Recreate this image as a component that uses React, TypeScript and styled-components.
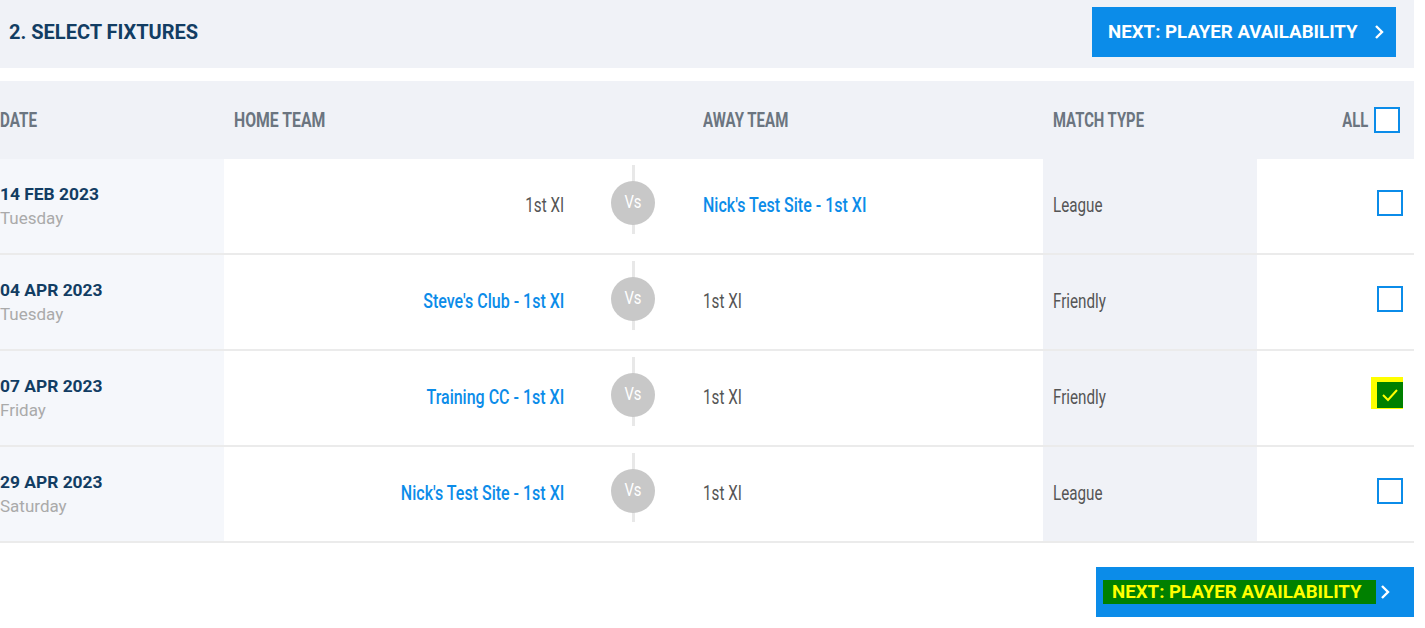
import React from 'react';
import styled, { createGlobalStyle } from 'styled-components';

const GlobalStyle = createGlobalStyle`
  html, body {
    margin: 0;
    padding: 0;
    background: #ffffff;
  }
`;

const navy = '#123d63';
const blue = '#0b8ce9';

const Page = styled.div`
  width: 1414px;
  font-family: Roboto, "Liberation Sans", sans-serif;
`;

const TopBar = styled.div`
  height: 68px;
  background: #f0f2f7;
  display: flex;
  align-items: center;
  justify-content: space-between;
  padding: 0 18px 4px 9px;
  box-sizing: border-box;
`;

const Title = styled.h2`
  margin: 0;
  font-size: 20px;
  font-weight: 700;
  color: ${navy};
`;

const NextButton = styled.button<{ $bottom?: boolean }>`
  height: 50px;
  width: ${(p) => (p.$bottom ? '318px' : '304px')};
  border: 0;
  background: ${blue};
  color: #ffffff;
  font-family: Roboto, "Liberation Sans", sans-serif;
  font-weight: 700;
  font-size: 18.7px;
  display: flex;
  align-items: center;
  gap: ${(p) => (p.$bottom ? '4px' : '16px')};
  padding: ${(p) => (p.$bottom ? '0 0 0 7px' : '0 0 0 16px')};
  box-sizing: border-box;
  cursor: pointer;
`;

const Highlight = styled.span`
  background: #008000;
  color: #ffff00;
  padding: 1px 14px 1px 9px;
`;

/* condensed look: the reference uses a narrow face we don't have */
const Narrow = styled.span<{ $origin?: 'left' | 'right' | 'center'; $scale?: number }>`
  display: inline-block;
  white-space: nowrap;
  transform: scaleX(${(p) => p.$scale ?? 0.78});
  transform-origin: ${(p) => p.$origin ?? 'left'} center;
`;

const Table = styled.div`
  margin-top: 13px;
`;

const cols = '224px 386px 46px 387px 214px 157px';

const HeadRow = styled.div`
  display: grid;
  grid-template-columns: ${cols};
  height: 78px;
  background: #f0f2f7;
  align-items: center;
  font-size: 19.5px;
  font-weight: 700;
  color: #6b7580;
`;

const HeadCell = styled.div<{ $pad?: number; $right?: boolean }>`
  padding-left: ${(p) => p.$pad ?? 0}px;
  display: flex;
  align-items: center;
  justify-content: ${(p) => (p.$right ? 'flex-end' : 'flex-start')};
  gap: 6px;
  padding-right: ${(p) => (p.$right ? '14px' : '0')};
`;

const Row = styled.div`
  display: grid;
  grid-template-columns: ${cols};
  height: 96px;
  position: relative;
  &::after {
    content: '';
    position: absolute;
    left: 0;
    right: 0;
    bottom: 0;
    height: 2px;
    background: #ebebeb;
  }
`;

const DateCell = styled.div`
  background: #f5f7fb;
  display: flex;
  flex-direction: column;
  justify-content: center;
  gap: 4px;
  padding-bottom: 2px;
`;

const DateMain = styled.div`
  font-size: 17.4px;
  font-weight: 700;
  color: ${navy};
`;

const DateDay = styled.div`
  font-size: 17px;
  color: #aaaaaa;
`;

const TeamCell = styled.div<{ $home?: boolean }>`
  display: flex;
  align-items: center;
  justify-content: ${(p) => (p.$home ? 'flex-end' : 'flex-start')};
  padding: ${(p) => (p.$home ? '0 46px 4px 0' : '0 0 4px 47px')};
`;

const Team = styled(Narrow)<{ $link?: boolean }>`
  font-size: 20px;
  font-weight: ${(p) => (p.$link ? 500 : 400)};
  color: ${(p) => (p.$link ? blue : '#555555')};
  transform: scaleX(${(p) => (p.$link ? 0.8 : 0.76)});
`;

const VsCell = styled.div`
  display: flex;
  justify-content: center;
  align-items: center;
  position: relative;
  padding-bottom: 8px;
  &::before {
    content: '';
    position: absolute;
    top: 6px;
    bottom: 21px;
    left: 50%;
    width: 3px;
    margin-left: -1.5px;
    background: #e8e8e8;
  }
`;

const VsBadge = styled.div`
  position: relative;
  width: 44px;
  height: 44px;
  border-radius: 50%;
  background: #c8c8c8;
  color: #ffffff;
  font-size: 19px;
  display: flex;
  align-items: center;
  justify-content: center;
  padding-bottom: 4px;
  box-sizing: border-box;
`;

const TypeCell = styled.div`
  background: #f0f2f7;
  display: flex;
  align-items: center;
  padding: 0 0 4px 10px;
`;

const CheckCell = styled.div`
  display: flex;
  align-items: center;
  justify-content: flex-end;
  padding: 0 11px 8px 0;
`;

const Box = styled.div<{ $checked?: boolean }>`
  width: 26px;
  height: 26px;
  box-sizing: border-box;
  border: 2px solid ${(p) => (p.$checked ? '#008000' : blue)};
  background: ${(p) => (p.$checked ? '#008000' : '#ffffff')};
  box-shadow: ${(p) => (p.$checked ? '-3px -2px 0 3px #ffff00' : 'none')};
  display: flex;
  align-items: center;
  justify-content: center;
`;

const Footer = styled.div`
  display: flex;
  justify-content: flex-end;
  padding-top: 24px;
`;

function Chevron() {
  return (
    <svg width="10" height="16" viewBox="0 0 10 16">
      <polyline points="2,2 8,8 2,14" fill="none" stroke="#ffffff" strokeWidth="2.4" />
    </svg>
  );
}

function Tick() {
  return (
    <svg width="18" height="14" viewBox="0 0 18 14">
      <polyline points="2,7 7,12 16,2" fill="none" stroke="#ffff00" strokeWidth="2" />
    </svg>
  );
}

interface Fixture {
  date: string;
  day: string;
  home: string;
  homeLink: boolean;
  away: string;
  awayLink: boolean;
  type: string;
  checked?: boolean;
}

const fixtures: Fixture[] = [
  { date: '14 FEB 2023', day: 'Tuesday', home: '1st XI', homeLink: false, away: "Nick's Test Site - 1st XI", awayLink: true, type: 'League' },
  { date: '04 APR 2023', day: 'Tuesday', home: "Steve's Club - 1st XI", homeLink: true, away: '1st XI', awayLink: false, type: 'Friendly' },
  { date: '07 APR 2023', day: 'Friday', home: 'Training CC - 1st XI', homeLink: true, away: '1st XI', awayLink: false, type: 'Friendly', checked: true },
  { date: '29 APR 2023', day: 'Saturday', home: "Nick's Test Site - 1st XI", homeLink: true, away: '1st XI', awayLink: false, type: 'League' },
];

export default function App() {
  return (
    <Page>
      <GlobalStyle />
      <TopBar>
        <Title>2. SELECT FIXTURES</Title>
        <NextButton>
          NEXT: PLAYER AVAILABILITY
          <Chevron />
        </NextButton>
      </TopBar>
      <Table>
        <HeadRow>
          <HeadCell><Narrow>DATE</Narrow></HeadCell>
          <HeadCell $pad={10}><Narrow $scale={0.81}>HOME TEAM</Narrow></HeadCell>
          <HeadCell />
          <HeadCell $pad={47}><Narrow $scale={0.77}>AWAY TEAM</Narrow></HeadCell>
          <HeadCell $pad={10}><Narrow $scale={0.76}>MATCH TYPE</Narrow></HeadCell>
          <HeadCell $right>
            <Narrow $origin="right" $scale={0.76}>ALL</Narrow>
            <Box />
          </HeadCell>
        </HeadRow>
        {fixtures.map((f) => (
          <Row key={f.date}>
            <DateCell>
              <DateMain>{f.date}</DateMain>
              <DateDay>{f.day}</DateDay>
            </DateCell>
            <TeamCell $home>
              <Team $origin="right" $link={f.homeLink}>{f.home}</Team>
            </TeamCell>
            <VsCell>
              <VsBadge><Narrow $origin="center">Vs</Narrow></VsBadge>
            </VsCell>
            <TeamCell>
              <Team $link={f.awayLink}>{f.away}</Team>
            </TeamCell>
            <TypeCell>
              <Team>{f.type}</Team>
            </TypeCell>
            <CheckCell>
              <Box $checked={f.checked}>{f.checked && <Tick />}</Box>
            </CheckCell>
          </Row>
        ))}
      </Table>
      <Footer>
        <NextButton $bottom>
          <Highlight>NEXT: PLAYER AVAILABILITY</Highlight>
          <Chevron />
        </NextButton>
      </Footer>
    </Page>
  );
}
